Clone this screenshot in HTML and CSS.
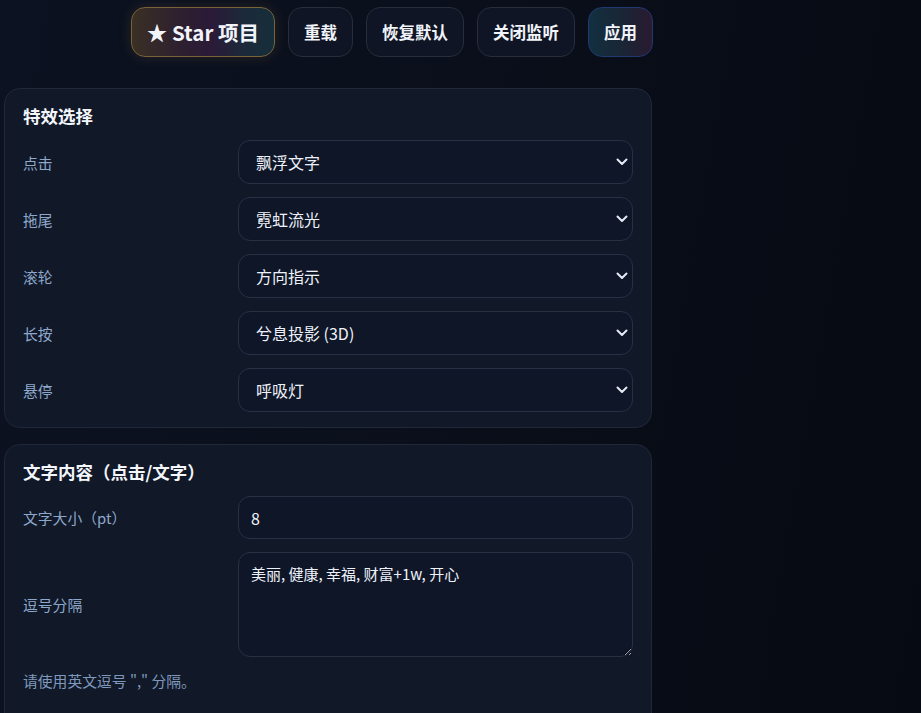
FILE: index.html
```html
<!DOCTYPE html>
<html lang="zh-CN">
<head>
<meta charset="utf-8">
<title>特效设置</title>
<link rel="stylesheet" href="styles.css">
</head>
<body>
<div class="wrap">
  <div class="toolbar">
    <button class="btn btn-star">★ Star 项目</button>
    <button class="btn">重载</button>
    <button class="btn">恢复默认</button>
    <button class="btn">关闭监听</button>
    <button class="btn btn-apply">应用</button>
  </div>

  <section class="card">
    <h2 class="card-title">特效选择</h2>
    <div class="row">
      <label class="label">点击</label>
      <div class="select-wrap">
        <select class="field"><option>飘浮文字</option></select>
        <svg class="chev" viewBox="0 0 12 8" width="12" height="8"><path d="M1.5 1.5 L6 6 L10.5 1.5" /></svg>
      </div>
    </div>
    <div class="row">
      <label class="label">拖尾</label>
      <div class="select-wrap">
        <select class="field"><option>霓虹流光</option></select>
        <svg class="chev" viewBox="0 0 12 8" width="12" height="8"><path d="M1.5 1.5 L6 6 L10.5 1.5" /></svg>
      </div>
    </div>
    <div class="row">
      <label class="label">滚轮</label>
      <div class="select-wrap">
        <select class="field"><option>方向指示</option></select>
        <svg class="chev" viewBox="0 0 12 8" width="12" height="8"><path d="M1.5 1.5 L6 6 L10.5 1.5" /></svg>
      </div>
    </div>
    <div class="row">
      <label class="label">长按</label>
      <div class="select-wrap">
        <select class="field"><option>兮息投影 (3D)</option></select>
        <svg class="chev" viewBox="0 0 12 8" width="12" height="8"><path d="M1.5 1.5 L6 6 L10.5 1.5" /></svg>
      </div>
    </div>
    <div class="row">
      <label class="label">悬停</label>
      <div class="select-wrap">
        <select class="field"><option>呼吸灯</option></select>
        <svg class="chev" viewBox="0 0 12 8" width="12" height="8"><path d="M1.5 1.5 L6 6 L10.5 1.5" /></svg>
      </div>
    </div>
  </section>

  <section class="card card-text">
    <h2 class="card-title">文字内容（点击/文字）</h2>
    <div class="row">
      <label class="label">文字大小（pt）</label>
      <input class="field input" type="text" value="8">
    </div>
    <div class="row">
      <label class="label">逗号分隔</label>
      <textarea class="field area">美丽, 健康, 幸福, 财富+1w, 开心</textarea>
    </div>
    <p class="hint">请使用英文逗号 "," 分隔。</p>
  </section>
</div>
</body>
</html>
```

FILE: styles.css
```css
html, body {
  margin: 0;
  padding: 0;
  height: 100%;
}
body {
  color-scheme: dark;
  background: linear-gradient(100deg, #0c1221 0%, #0a0f1b 45%, #060a12 100%);
  font-family: "Noto Sans CJK SC", "Noto Sans", sans-serif;
  color: #e6ebf5;
  overflow: hidden;
}
.wrap {
  width: 648px;
  margin-left: 4px;
  padding-top: 7px;
}
.toolbar {
  display: flex;
  justify-content: flex-end;
  gap: 13px;
  margin-right: -1px;
  margin-bottom: 31px;
}
.btn {
  height: 50px;
  padding: 0 15px;
  border-radius: 14px;
  border: 1px solid #262d3b;
  background: #0f1524;
  color: #f1f4fa;
  font-family: "Noto Sans CJK SC", sans-serif;
  font-weight: 700;
  font-size: 16.5px;
  cursor: pointer;
}
.btn-star {
  padding: 0 15px;
  font-size: 20.5px;
  border-color: #7a6339;
  background: linear-gradient(90deg, #3a3024 0%, #2e1f30 35%, #2b1a38 55%, #1b2a3a 80%, #162e3a 100%);
  box-shadow: 0 0 14px rgba(160, 130, 70, 0.18);
}
.btn-apply {
  border-color: #1f3a72;
  background: linear-gradient(90deg, #123040 0%, #1a2535 55%, #2a1a30 100%);
}
.card {
  background: #111828;
  border: 1px solid #202839;
  border-radius: 16px;
  padding: 14px 18px 15px;
  margin-bottom: 16px;
}
.card-text {
  padding-bottom: 40px;
}
.card-title {
  margin: 0 0 11px;
  font-size: 17.5px;
  font-weight: 700;
  line-height: 26px;
  color: #f3f6fb;
}
.row {
  display: grid;
  grid-template-columns: 200px 1fr;
  column-gap: 15px;
  align-items: center;
  margin-bottom: 13px;
}
.row:last-child {
  margin-bottom: 0;
}
.label {
  font-size: 14.8px;
  color: #8ea8cc;
}
.select-wrap {
  position: relative;
}
.field {
  box-sizing: border-box;
  display: block;
  width: 100%;
  height: 44px;
  border: 1px solid #283043;
  border-radius: 12px;
  background: #0f1628;
  color: #eef2f8;
  font-family: "Noto Sans CJK SC", "Noto Sans", sans-serif;
  font-size: 16px;
  padding: 0 30px 0 17px;
  outline: none;
}
select.field {
  appearance: none;
  -webkit-appearance: none;
}
.chev {
  position: absolute;
  right: 5px;
  top: 18px;
  fill: none;
  stroke: #e4eaf4;
  stroke-width: 2;
  stroke-linecap: round;
  stroke-linejoin: round;
  pointer-events: none;
}
.input {
  height: 43px;
  padding-left: 12px;
  font-size: 16px;
}
.area {
  height: 105px;
  padding: 10px 12px;
  font-size: 15px;
  line-height: 22px;
  resize: vertical;
}
.hint {
  margin: 10px 0 0;
  font-size: 14.8px;
  color: #7f98bd;
}
```
